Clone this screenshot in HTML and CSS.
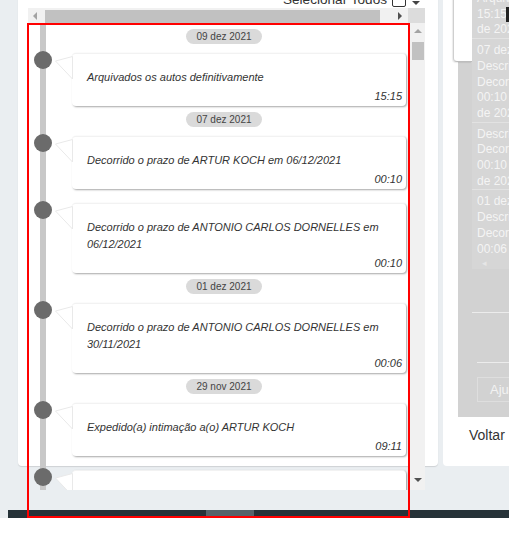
FILE: index.html
```html
<!DOCTYPE html>
<html lang="pt-BR">
<head>
<meta charset="utf-8">
<title>Timeline</title>
<link rel="stylesheet" href="styles.css">
</head>
<body>
<div class="page">
  <div class="cols">
    <section class="card-left">
      <div class="head">
        <span class="sel-label">Selecionar Todos</span>
        <span class="checkbox"></span>
        <span class="caret"></span>
      </div>
      <div class="hbar">
        <div class="hscroll">
          <span class="arr arr-left dim"></span>
          <span class="hthumb"></span>
          <span class="arr arr-right"></span>
        </div>
        <div class="corner"></div>
      </div>
      <div class="viewport">
        <div class="list">
          <div class="line"></div>
          <div class="pill">09 dez 2021</div>
          <div class="event">
            <span class="dot"></span>
            <div class="bubble">
              <svg class="tail" width="18" height="24" viewBox="0 0 18 24"><polygon points="0.5,5 17.5,0.5 17.5,23" fill="#fff" stroke="#e9e9e9" stroke-width="1"/></svg>
              <p class="msg">Arquivados os autos definitivamente</p>
              <p class="time">15:15</p>
            </div>
          </div>
          <div class="pill">07 dez 2021</div>
          <div class="event">
            <span class="dot"></span>
            <div class="bubble">
              <svg class="tail" width="18" height="24" viewBox="0 0 18 24"><polygon points="0.5,5 17.5,0.5 17.5,23" fill="#fff" stroke="#e9e9e9" stroke-width="1"/></svg>
              <p class="msg">Decorrido o prazo de ARTUR KOCH em 06/12/2021</p>
              <p class="time">00:10</p>
            </div>
          </div>
          <div class="event">
            <span class="dot"></span>
            <div class="bubble">
              <svg class="tail" width="18" height="24" viewBox="0 0 18 24"><polygon points="0.5,5 17.5,0.5 17.5,23" fill="#fff" stroke="#e9e9e9" stroke-width="1"/></svg>
              <p class="msg">Decorrido o prazo de ANTONIO CARLOS DORNELLES em 06/12/2021</p>
              <p class="time">00:10</p>
            </div>
          </div>
          <div class="pill">01 dez 2021</div>
          <div class="event">
            <span class="dot"></span>
            <div class="bubble">
              <svg class="tail" width="18" height="24" viewBox="0 0 18 24"><polygon points="0.5,5 17.5,0.5 17.5,23" fill="#fff" stroke="#e9e9e9" stroke-width="1"/></svg>
              <p class="msg">Decorrido o prazo de ANTONIO CARLOS DORNELLES em 30/11/2021</p>
              <p class="time">00:06</p>
            </div>
          </div>
          <div class="pill">29 nov 2021</div>
          <div class="event">
            <span class="dot"></span>
            <div class="bubble">
              <svg class="tail" width="18" height="24" viewBox="0 0 18 24"><polygon points="0.5,5 17.5,0.5 17.5,23" fill="#fff" stroke="#e9e9e9" stroke-width="1"/></svg>
              <p class="msg">Expedido(a) intimação a(o) ARTUR KOCH</p>
              <p class="time">09:11</p>
            </div>
          </div>
          <div class="event">
            <span class="dot"></span>
            <div class="bubble">
              <svg class="tail" width="18" height="24" viewBox="0 0 18 24"><polygon points="0.5,5 17.5,0.5 17.5,23" fill="#fff" stroke="#e9e9e9" stroke-width="1"/></svg>
              <p class="msg">Expedido(a) intimação a(o) ANTONIO CARLOS DORNELLES</p>
              <p class="time">09:11</p>
            </div>
          </div>
        </div>
        <div class="vscroll">
          <span class="arr arr-up dim"></span>
          <span class="vthumb"></span>
          <span class="arr arr-down"></span>
        </div>
      </div>
      <div class="outline"></div>
    </section>
    <section class="card-right">
      <div class="ghost">
        <div class="ghost-list">
          <div class="grow first">
            <div class="gl">Arquivados</div>
            <div class="gl">15:15</div>
            <div class="gl">de 2021</div>
          </div>
          <div class="grow">
            <div class="gl">07 dez 2021</div>
            <div class="gl">Descrição</div>
            <div class="gl">Decorrido o prazo</div>
            <div class="gl">00:10</div>
            <div class="gl">de 2021</div>
          </div>
          <div class="grow">
            <div class="gl">Descrição</div>
            <div class="gl">Decorrido o prazo</div>
            <div class="gl">00:10</div>
            <div class="gl">de 2021</div>
          </div>
          <div class="grow last">
            <div class="gl">01 dez 2021</div>
            <div class="gl">Descrição</div>
            <div class="gl">Decorrido o prazo</div>
            <div class="gl">00:06</div>
            <div class="gl small">&#9666;</div>
          </div>
        </div>
        <div class="gsep gsep1"></div>
        <div class="gsep gsep2"></div>
        <div class="gbtn">Ajuda</div>
        <span class="cursor"></span>
      </div>
      <div class="popup"></div>
      <div class="voltar">Voltar</div>
    </section>
  </div>
  <div class="bottom-bar"><span class="bthumb"></span></div>
</div>
</body>
</html>
```
FILE: styles.css
```css
* { box-sizing: border-box; }
html, body { margin: 0; padding: 0; }
body {
  background: #ffffff;
  font-family: "Liberation Sans", Arial, sans-serif;
  color: #333;
  overflow: hidden;
  width: 509px;
  height: 543px;
}
.page {
  background: #eaeef1;
  height: 518px;
  padding-left: 8px;
  display: flex;
  flex-direction: column;
}
.cols {
  display: flex;
  gap: 5px;
  margin-top: -12px;
  height: 520px;
  padding-left: 10px;
}
.card-left {
  position: relative;
  width: 420px;
  height: 478px;
  flex: none;
  background: #fff;
  border-radius: 0 0 4px 4px;
  box-shadow: 0 1px 1px rgba(0,0,0,0.12);
  padding: 0 13px 0 10px;
}
.head {
  height: 20px;
  display: flex;
  justify-content: flex-end;
  align-items: flex-end;
  padding-right: 5px;
}
.sel-label {
  font-size: 13.6px;
  line-height: 13px;
  margin-bottom: 2px;
  margin-right: 5px;
  color: #333;
}
.checkbox {
  width: 14px;
  height: 14px;
  border: 1px solid #333;
  border-radius: 2px;
  background: #fff;
  margin-bottom: 1px;
}
.caret {
  width: 0; height: 0;
  border-left: 4px solid transparent;
  border-right: 4px solid transparent;
  border-top: 4px solid #444;
  margin: 0 0 3px 6px;
}
.hbar {
  display: flex;
  height: 15px;
}
.hscroll {
  flex: 1;
  background: #f1f1f1;
  position: relative;
  display: flex;
  align-items: center;
}
.hthumb {
  position: absolute;
  left: 17px;
  width: 335px;
  top: 2px;
  bottom: 0;
  background: #c1c1c1;
}
.corner { width: 17px; background: #dcdcdc; }
.arr { position: absolute; width: 0; height: 0; }
.arr-left {
  left: 5px; top: 4px;
  border-top: 4px solid transparent;
  border-bottom: 4px solid transparent;
  border-right: 4px solid #505050;
}
.arr-right {
  right: 6px; top: 4px;
  border-top: 4px solid transparent;
  border-bottom: 4px solid transparent;
  border-left: 4px solid #505050;
}
.arr-left.dim { border-right-color: #a3a3a3; }
.arr-up {
  left: 4px; top: 6px;
  border-left: 4px solid transparent;
  border-right: 4px solid transparent;
  border-bottom: 4px solid #505050;
}
.arr-down {
  left: 4px; bottom: 8px;
  border-left: 4px solid transparent;
  border-right: 4px solid transparent;
  border-top: 4px solid #505050;
}
.arr-up.dim { border-bottom-color: #a3a3a3; }
.viewport {
  display: flex;
  height: 467px;
  width: 397px;
}
.list {
  position: relative;
  flex: 1;
  overflow: hidden;
  padding: 6px 4px 0 44px;
}
.line {
  position: absolute;
  left: 12px;
  top: 0;
  bottom: 0;
  width: 6px;
  background: #c8c8c8;
}
.vscroll {
  width: 15px;
  background: #f1f1f1;
  position: relative;
}
.vthumb {
  position: absolute;
  left: 2px; right: 1px;
  top: 19px;
  height: 18px;
  background: #c1c1c1;
}
.pill {
  width: 76px;
  height: 15px;
  margin: 0 0 9px 114px;
  background: #dadada;
  border-radius: 8px;
  font-size: 10px;
  line-height: 15px;
  text-align: center;
  color: #444;
}
.event + .pill { margin-top: -8px; }
.event {
  position: relative;
  margin-bottom: 14px;
}
.dot {
  position: absolute;
  left: -38px;
  top: -2px;
  width: 18px;
  height: 18px;
  border-radius: 50%;
  background: #6b6b6b;
}
.bubble {
  position: relative;
  background: #fff;
  border-radius: 4px;
  border-top: 1px solid #f2f2f2;
  box-shadow: 1px 1px 2px rgba(0,0,0,0.35);
  padding: 15px 4px 1px 15px;
}
.tail {
  position: absolute;
  left: -17px;
  top: 2px;
  display: block;
}
.msg {
  margin: 0;
  font-size: 11px;
  line-height: 17px;
  font-style: italic;
  color: #333;
  padding-right: 20px;
}
.time {
  margin: 2px 0 0;
  font-size: 11px;
  line-height: 17px;
  font-style: italic;
  text-align: right;
  color: #333;
}
.outline {
  position: absolute;
  left: 9px;
  top: 35px;
  width: 383px;
  height: 495px;
  border: 2px solid #ff0000;
  pointer-events: none;
  z-index: 5;
}
.card-right {
  position: relative;
  width: 120px;
  height: 478px;
  flex: none;
  background: #fff;
  border-radius: 0 0 4px 4px;
  padding: 0 0 0 15px;
  white-space: nowrap;
  overflow: hidden;
}
.popup {
  position: absolute;
  left: 10px;
  top: 0;
  width: 19px;
  height: 74px;
  background: #fff;
  border-left: 1px solid #cfcfcf;
  border-bottom: 1px solid #bdbdbd;
  border-radius: 0 0 0 4px;
  box-shadow: -1px 1px 1px rgba(0,0,0,0.08);
  z-index: 2;
}
.ghost {
  background: #d2d2d2;
  height: 429px;
  padding: 3px 0 0 14px;
  position: relative;
}
.ghost-list { background: #d6d6d6; }
.grow {
  padding: 4px 0 0 5px;
  border-bottom: 1px solid #e2e2e2;
}
.grow.first { padding-top: 0; }
.grow.last { border-bottom: 0; }
.gl {
  font-size: 12px;
  line-height: 15.7px;
  color: #f4f4f4;
}
.gl.small { font-size: 9px; line-height: 12px; color: #e6e6e6; padding-left: 5px; }
.cursor {
  position: absolute;
  left: 48px;
  top: 19px;
  width: 3px;
  height: 15px;
  background: #222;
}
.gsep {
  position: absolute;
  left: 14px;
  right: 0;
  height: 1px;
  background: #ececec;
}
.gsep1 { top: 324px; }
.gsep2 { top: 374px; left: 19px; }
.gbtn {
  position: absolute;
  left: 19px;
  top: 389px;
  width: 100px;
  height: 25px;
  border: 1px solid #dedede;
  color: #f2f2f2;
  font-size: 13px;
  line-height: 23px;
  padding-left: 12px;
}
.voltar {
  font-size: 14px;
  line-height: 16px;
  margin: 10px 0 0 11px;
  color: #333;
}
.bottom-bar {
  margin-top: auto;
  height: 8px;
  background: #263238;
  position: relative;
}
.bthumb {
  position: absolute;
  left: 198px;
  width: 48px;
  top: 0;
  bottom: 0;
  background: #56636a;
}
```
